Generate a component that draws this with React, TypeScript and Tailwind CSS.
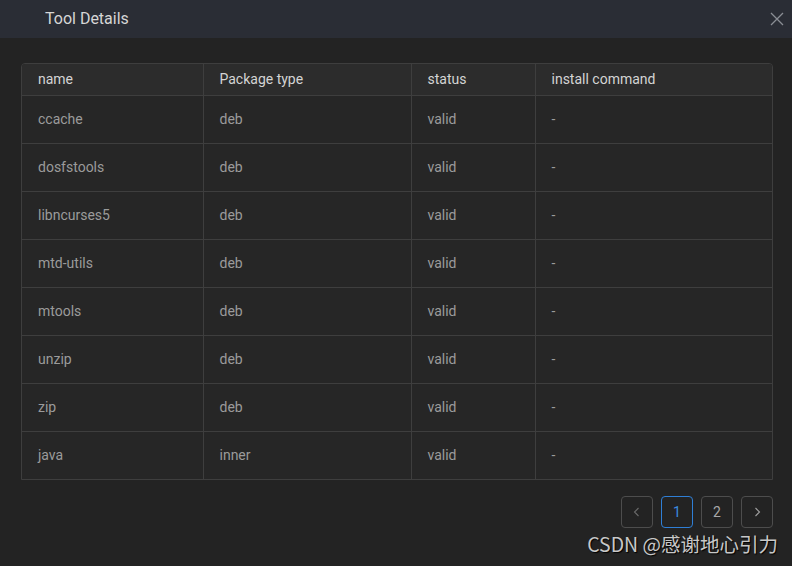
import React from "react";

type Tool = { name: string; type: string; status: string; cmd: string };

const tools: Tool[] = [
  { name: "ccache", type: "deb", status: "valid", cmd: "-" },
  { name: "dosfstools", type: "deb", status: "valid", cmd: "-" },
  { name: "libncurses5", type: "deb", status: "valid", cmd: "-" },
  { name: "mtd-utils", type: "deb", status: "valid", cmd: "-" },
  { name: "mtools", type: "deb", status: "valid", cmd: "-" },
  { name: "unzip", type: "deb", status: "valid", cmd: "-" },
  { name: "zip", type: "deb", status: "valid", cmd: "-" },
  { name: "java", type: "inner", status: "valid", cmd: "-" },
];

const App = () => {
  return (
    <div
      className="w-[792px] h-[566px] bg-[#232323] flex flex-col overflow-hidden"
      style={{ fontFamily: "Roboto, 'Liberation Sans', sans-serif" }}
    >
      {/* header */}
      <div className="h-[38px] bg-[#2a2d35] flex items-center justify-between pl-[45px] pr-[8px] shrink-0">
        <span className="text-[16px] text-[#d6d6d6]">Tool Details</span>
        <svg width="14" height="14" viewBox="0 0 14 14" className="text-[#8a8d94]">
          <path d="M1 1 L13 13 M13 1 L1 13" stroke="currentColor" strokeWidth="1.3" fill="none" />
        </svg>
      </div>

      <div className="pl-[21px] pr-[19px] pt-[25px] flex flex-col">
        {/* table */}
        <div className="border border-[#3e3e3e] rounded-t-[4px] overflow-hidden">
          <table className="w-full border-collapse text-[14px] table-fixed">
            <colgroup>
              <col className="w-[181px]" />
              <col className="w-[208px]" />
              <col className="w-[124px]" />
              <col />
            </colgroup>
            <thead>
              <tr className="bg-[#2c2c2c] text-[#d4d4d4] h-[31px] text-left">
                <th className="font-normal px-[16px] border-r border-[#3e3e3e]">name</th>
                <th className="font-normal px-[16px] border-r border-[#3e3e3e]">Package type</th>
                <th className="font-normal px-[16px] border-r border-[#3e3e3e]">status</th>
                <th className="font-normal px-[16px]">install command</th>
              </tr>
            </thead>
            <tbody>
              {tools.map((t) => (
                <tr key={t.name} className="h-[48px] bg-[#262626] text-[#9b9b9b] border-t border-[#3e3e3e]">
                  <td className="px-[16px] border-r border-[#3e3e3e]">{t.name}</td>
                  <td className="px-[16px] border-r border-[#3e3e3e]">{t.type}</td>
                  <td className="px-[16px] border-r border-[#3e3e3e]">{t.status}</td>
                  <td className="px-[16px]">{t.cmd}</td>
                </tr>
              ))}
            </tbody>
          </table>
        </div>

        {/* pagination */}
        <div className="flex justify-end gap-[8px] mt-[16px]">
          <button className="w-[32px] h-[32px] rounded-[4px] border border-[#4d4d4d] flex items-center justify-center text-[#6a6a6a]">
            <svg width="12" height="12" viewBox="0 0 12 12">
              <path d="M7.5 2 L3.5 6 L7.5 10" stroke="currentColor" strokeWidth="1.1" fill="none" />
            </svg>
          </button>
          <button className="w-[32px] h-[32px] rounded-[4px] border border-[#2f7fd6] text-[#3a8be0] text-[14px]">1</button>
          <button className="w-[32px] h-[32px] rounded-[4px] border border-[#4d4d4d] text-[#a8a8a8] text-[14px]">2</button>
          <button className="w-[32px] h-[32px] rounded-[4px] border border-[#4d4d4d] flex items-center justify-center text-[#a0a0a0]">
            <svg width="12" height="12" viewBox="0 0 12 12">
              <path d="M4.5 2 L8.5 6 L4.5 10" stroke="currentColor" strokeWidth="1.1" fill="none" />
            </svg>
          </button>
        </div>
        <div className="flex justify-end -mr-[5px] mt-[4px]">
          <span
            className="text-[19.5px] text-[#c8c8c8] leading-[24px] [text-shadow:1px_1px_1px_#000]"
            style={{ fontFamily: "'Noto Sans CJK SC', Roboto, sans-serif" }}
          >
            CSDN @感谢地心引力
          </span>
        </div>
      </div>
    </div>
  );
};

export default App;
